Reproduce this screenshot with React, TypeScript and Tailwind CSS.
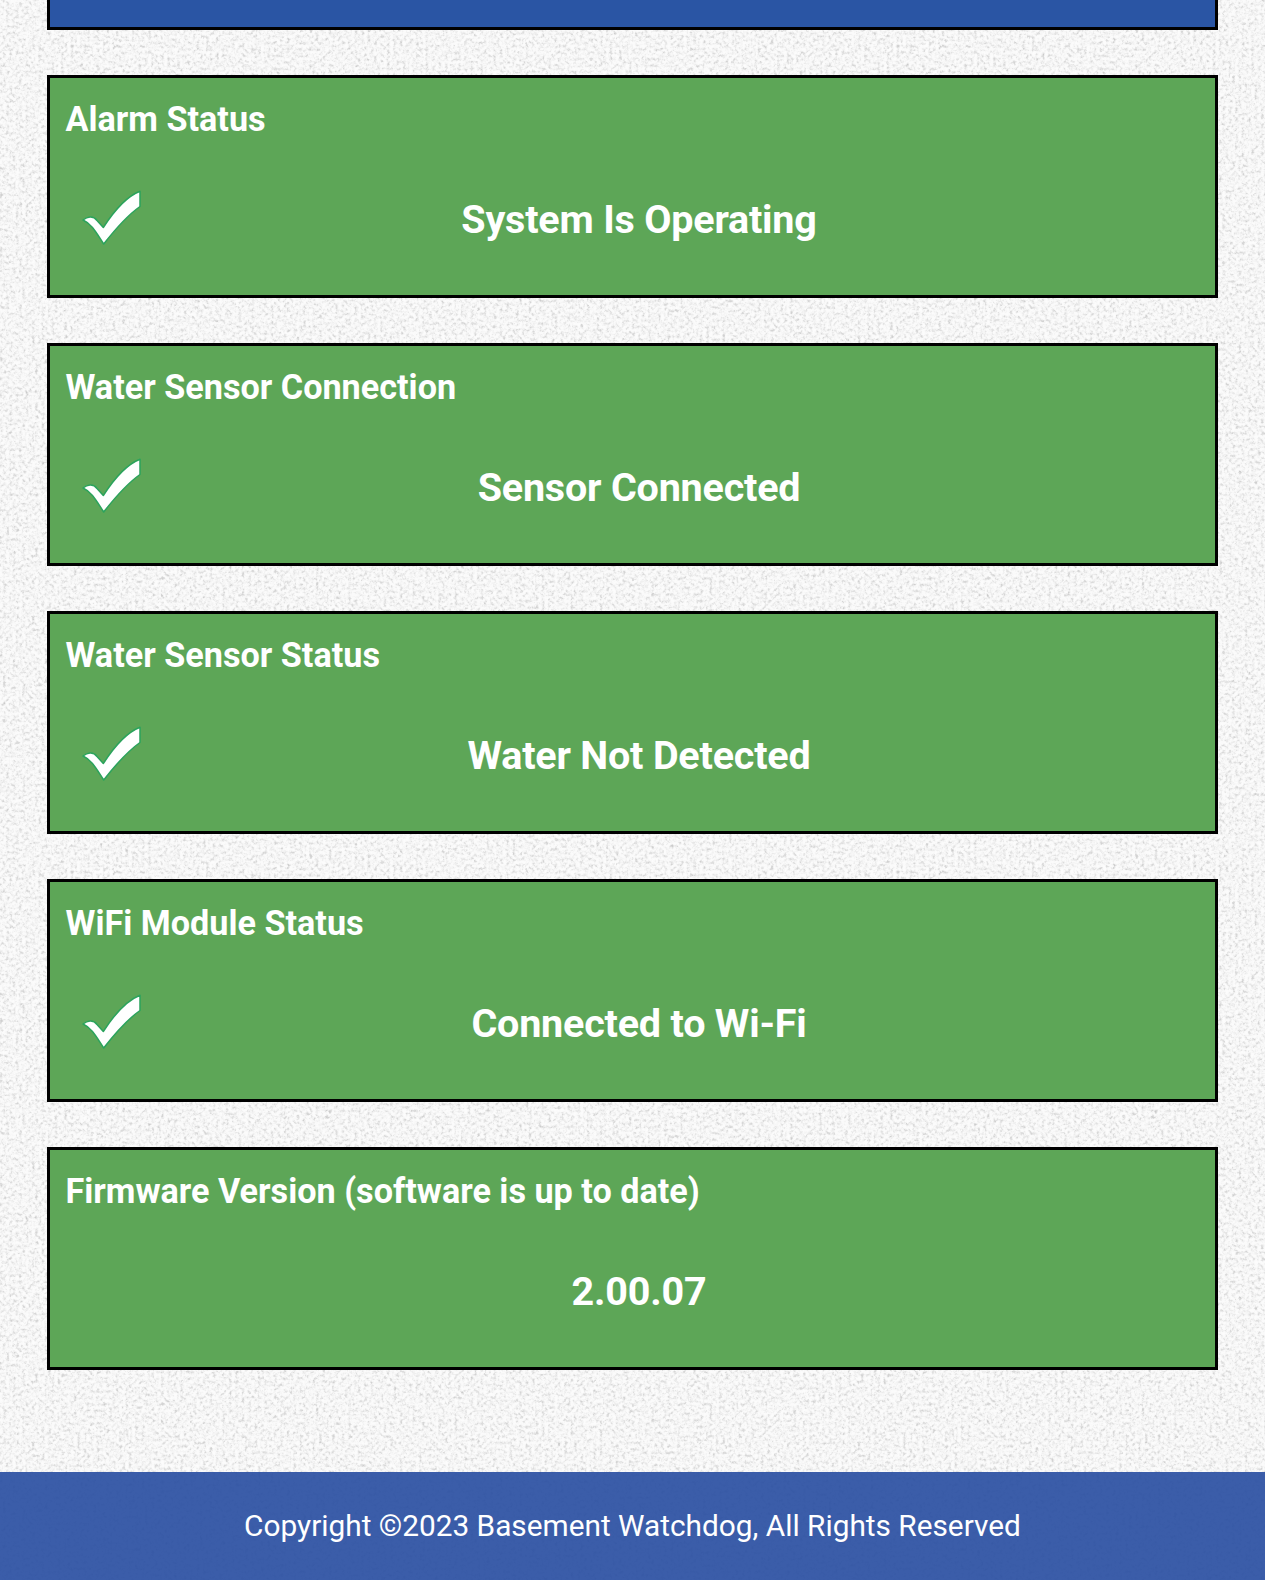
type StatusItem = {
  title: string;
  value: string;
  ok?: boolean;
};

const STATUSES: StatusItem[] = [
  { title: "Alarm Status", value: "System Is Operating", ok: true },
  { title: "Water Sensor Connection", value: "Sensor Connected", ok: true },
  { title: "Water Sensor Status", value: "Water Not Detected", ok: true },
  { title: "WiFi Module Status", value: "Connected to Wi-Fi", ok: true },
  { title: "Firmware Version (software is up to date)", value: "2.00.07" },
];

/** Grainy paper texture behind the whole page, footer included. */
function PaperTexture() {
  return (
    <svg className="absolute inset-0 -z-10 h-full w-full" aria-hidden="true">
      <filter id="paper" x="0" y="0" width="100%" height="100%" colorInterpolationFilters="sRGB">
        <feTurbulence type="fractalNoise" baseFrequency="0.31" numOctaves="3" seed="11" />
        {/* Average three channels into an opaque grey */}
        <feColorMatrix
          type="matrix"
          values="0.55 0.55 0.55 0 -0.3  0.55 0.55 0.55 0 -0.3  0.55 0.55 0.55 0 -0.3  0 0 0 0 1"
        />
        {/* Mostly white, with only the dark tail showing as specks */}
        <feComponentTransfer>
          <feFuncR type="table" tableValues="0.78 0.81 0.84 0.88 0.925 0.96 0.98 0.985 0.99 0.99 0.99" />
          <feFuncG type="table" tableValues="0.78 0.81 0.84 0.88 0.925 0.96 0.98 0.985 0.99 0.99 0.99" />
          <feFuncB type="table" tableValues="0.78 0.81 0.84 0.88 0.925 0.96 0.98 0.985 0.99 0.99 0.99" />
        </feComponentTransfer>
      </filter>
      <rect width="100%" height="100%" filter="url(#paper)" />
    </svg>
  );
}

function CheckMark() {
  return (
    <svg
      viewBox="0 0 66 60"
      className="absolute left-[29px] top-[110px] h-[60px] w-[66px]"
      aria-hidden="true"
    >
      <path
        d="M4 32C8 29 14 27 18 32.500L24.300 39.500C33 26 46 9 61 3.200V18.500C49 27 36 41.500 24.700 56C18 46 13 36 4 32Z"
        fill="#fff"
        stroke="#2ba35c"
        strokeWidth="1.5"
        strokeLinejoin="round"
      />
    </svg>
  );
}

function StatusCard({ title, value, ok }: StatusItem) {
  return (
    <section className="relative h-[223px] border-3 border-black bg-[#5da657] pt-[21px] text-white">
      <h2 className="pl-[15.500px] text-[34.2px] font-bold leading-10">{title}</h2>
      {ok ? <CheckMark /> : null}
      <p className="mt-[57px] pl-[13px] text-center text-[39.5px] font-bold leading-[48px] tracking-[-0.2px]">
        {value}
      </p>
    </section>
  );
}

export default function App() {
  return (
    <div className="relative isolate flex h-[1580px] flex-col overflow-hidden font-['Roboto',sans-serif]">
      <PaperTexture />
      <main className="flex flex-1 flex-col gap-[45px] px-[47px]">
        {/* Tail end of the blue panel above the status list */}
        <div className="h-[30px] border-3 border-t-0 border-black bg-[#2a55a4]" />
        {STATUSES.map((item) => (
          <StatusCard key={item.title} {...item} />
        ))}
      </main>
      <footer className="h-[108px] bg-[#2a4fa2]/92 pt-[34px] text-center text-[29.8px] leading-10 text-white">
        Copyright ©2023 Basement Watchdog, All Rights Reserved
      </footer>
    </div>
  );
}
